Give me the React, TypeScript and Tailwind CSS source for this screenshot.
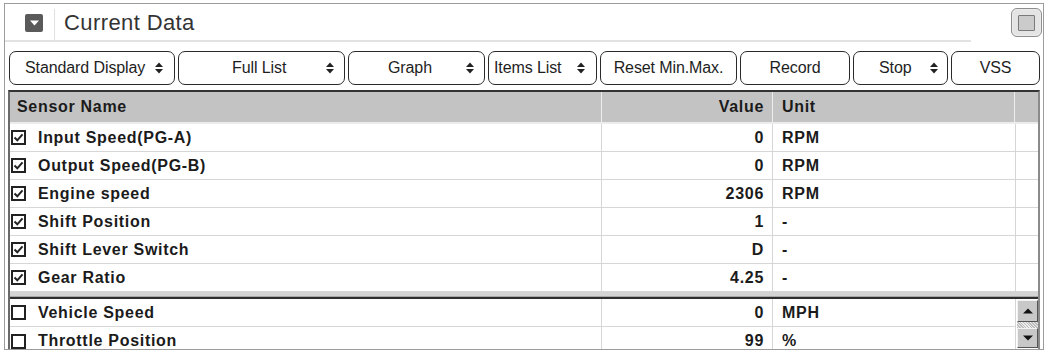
import React from "react";

const Spinner = () => (
  <svg width="8" height="12" viewBox="0 0 8 12" className="shrink-0">
    <path d="M0 5 L4 0.5 L8 5 Z" fill="#222" />
    <path d="M0 7 L8 7 L4 11.5 Z" fill="#222" />
  </svg>
);

const CheckBox = ({ checked }: { checked: boolean }) => (
  <span className="w-[15px] h-[15px] border-2 border-[#222] flex items-center justify-center shrink-0 bg-white">
    {checked && (
      <svg width="11" height="11" viewBox="0 0 11 11">
        <path d="M1.5 5.5 L4.3 8.3 L9.5 2.3" stroke="#222" strokeWidth="2" fill="none" />
      </svg>
    )}
  </span>
);

// pl is where the label starts, spin puts the up/down arrows at the right
const buttons = [
  { label: "Standard Display", w: "w-[166px]", spin: true, pad: "pl-[15px] pr-[11px]" },
  { label: "Full List", w: "w-[167px]", spin: true, pad: "pl-[53px] pr-[10px]" },
  { label: "Graph", w: "w-[137px]", spin: true, pad: "pl-[39px] pr-[10px]" },
  { label: "Items List", w: "w-[109px]", spin: true, pad: "pl-[5px] pr-[11px]" },
  { label: "Reset Min.Max.", w: "w-[137px]", spin: false, pad: "justify-center" },
  { label: "Record", w: "w-[110px]", spin: false, pad: "justify-center" },
  { label: "Stop", w: "w-[95px]", spin: true, pad: "pl-[25px] pr-[9px]" },
  { label: "VSS", w: "w-[89px]", spin: false, pad: "justify-center" },
];

const upperRows = [
  { name: "Input Speed(PG-A)", value: "0", unit: "RPM" },
  { name: "Output Speed(PG-B)", value: "0", unit: "RPM" },
  { name: "Engine speed", value: "2306", unit: "RPM" },
  { name: "Shift Position", value: "1", unit: "-" },
  { name: "Shift Lever Switch", value: "D", unit: "-" },
  { name: "Gear Ratio", value: "4.25", unit: "-" },
];

const lowerRows = [
  { name: "Vehicle Speed", value: "0", unit: "MPH" },
  { name: "Throttle Position", value: "99", unit: "%" },
];

const Row = ({ row, checked, last }: { row: { name: string; value: string; unit: string }; checked: boolean; last?: boolean }) => (
  <div className={`flex h-[28px] ${last ? "" : "border-b border-[#d6d6d6]"}`}>
    <div className="w-[592px] flex items-center pl-[1px] gap-[12px] border-r border-[#d6d6d6]">
      <CheckBox checked={checked} />
      <span>{row.name}</span>
    </div>
    <div className="w-[171px] flex items-center justify-end pr-[8px] border-r border-[#d6d6d6]">{row.value}</div>
    <div className="w-[242px] flex items-center pl-[9px]">{row.unit}</div>
  </div>
);

export default function App() {
  return (
    <div className="w-[1050px] h-[352px] bg-white overflow-hidden pt-[3px] pl-[4px]">
      <div className="w-[1040px] h-[347px] border border-[#9c9c9c] overflow-hidden font-['Liberation_Sans']">
        {/* title */}
        <div className="flex h-[38px]">
          <div className="w-[966px] h-[38px] flex items-center border-b-2 border-[#e2e2e2] pl-[20px]">
            <span className="w-[18px] h-[18px] bg-[#5a5a5a] rounded-[2px] flex items-center justify-center mt-[2px]">
              <svg width="9" height="6" viewBox="0 0 9 6">
                <path d="M0 0.5 L9 0.5 L4.5 5.5 Z" fill="#fff" />
              </svg>
            </span>
            <span className="w-px h-[32px] bg-[#e0e0e0] ml-[11px] mt-[6px]" />
            <span className="ml-[9px] text-[22px] text-[#333] tracking-[0.4px] leading-none mt-[1px]">Current Data</span>
          </div>
          <div className="flex-1 flex justify-end pt-[4px] pr-[1px]">
            <div className="w-[31px] h-[29px] rounded-[6px] border border-[#8e8e8e] bg-[#e4e4e4] flex items-center justify-center shadow-[inset_0_0_2px_#fff]">
              <span className="w-[17px] h-[16px] bg-[#cbcbcb] border border-[#7a7a7a] rounded-[1px]" />
            </div>
          </div>
        </div>

        {/* toolbar */}
        <div className="flex gap-[3px] pl-[4px] mt-[9px] h-[34px]">
          {buttons.map((b) => (
            <div
              key={b.label}
              className={`${b.w} h-[34px] border border-[#2a2a2a] rounded-[7px] flex items-center ${b.pad} text-[16px] text-[#1e1e1e] tracking-[-0.1px]`}
            >
              <span>{b.label}</span>
              {b.spin && (
                <span className="ml-auto flex">
                  <Spinner />
                </span>
              )}
            </div>
          ))}
        </div>

        {/* table */}
        <div className="ml-[3px] mt-[5px] w-[1032px] border-t-2 border-[#333] border-l-2 border-l-[#6a6a6a] border-r-2 border-r-[#8a8a8a] text-[16px] font-bold text-[#1b1b1b] tracking-[0.7px]">
          {/* header */}
          <div className="flex h-[32px] bg-[#c3c3c3] border-b-2 border-[#ececec]">
            <div className="w-[592px] flex items-center pl-[7px] border-r border-r-[#ededed]">Sensor Name</div>
            <div className="w-[171px] flex items-center justify-end pr-[8px] border-r border-r-[#ededed]">Value</div>
            <div className="w-[242px] flex items-center pl-[9px] border-r border-r-[#ededed]">Unit</div>
            <div className="flex-1" />
          </div>

          {/* upper rows */}
          <div className="flex">
            <div className="w-[1006px] border-r border-[#d6d6d6]">
              {upperRows.map((r) => (
                <Row key={r.name} row={r} checked={true} />
              ))}
            </div>
            <div className="flex-1 flex flex-col">
              {upperRows.map((r) => (
                <div key={r.name} className="h-[28px] border-b border-[#d6d6d6]" />
              ))}
            </div>
          </div>

          {/* separator */}
          <div className="h-[6px] bg-[#d4d4d4] border-b border-[#a8a8a8] -mt-px" />

          {/* lower rows */}
          <div className="flex border-t-2 border-[#2e2e2e]">
            <div className="w-[1006px] border-r border-[#d6d6d6]">
              {lowerRows.map((r, i) => (
                <Row key={r.name} row={r} checked={false} last={i === lowerRows.length - 1} />
              ))}
            </div>
            <div className="flex-1 flex flex-col pt-[1px] pl-[1px]">
              <div className="h-[22px] bg-[#c8c8c8] border-t border-l border-t-[#f2f2f2] border-l-[#f2f2f2] border-b border-r border-b-[#555] border-r-[#555] flex items-center justify-center">
                <svg width="10" height="6" viewBox="0 0 10 6">
                  <path d="M0 5.5 L5 0.5 L10 5.5 Z" fill="#111" />
                </svg>
              </div>
              <div className="h-[6px] bg-[repeating-linear-gradient(45deg,#bdbdbd_0,#bdbdbd_1px,#ececec_1px,#ececec_2px)]" />
              <div className="h-[20px] bg-[#c8c8c8] border-t border-l border-t-[#f2f2f2] border-l-[#f2f2f2] border-b border-r border-b-[#555] border-r-[#555] flex items-center justify-center">
                <svg width="10" height="6" viewBox="0 0 10 6">
                  <path d="M0 0.5 L10 0.5 L5 5.5 Z" fill="#111" />
                </svg>
              </div>
            </div>
          </div>
        </div>
      </div>
    </div>
  );
}
